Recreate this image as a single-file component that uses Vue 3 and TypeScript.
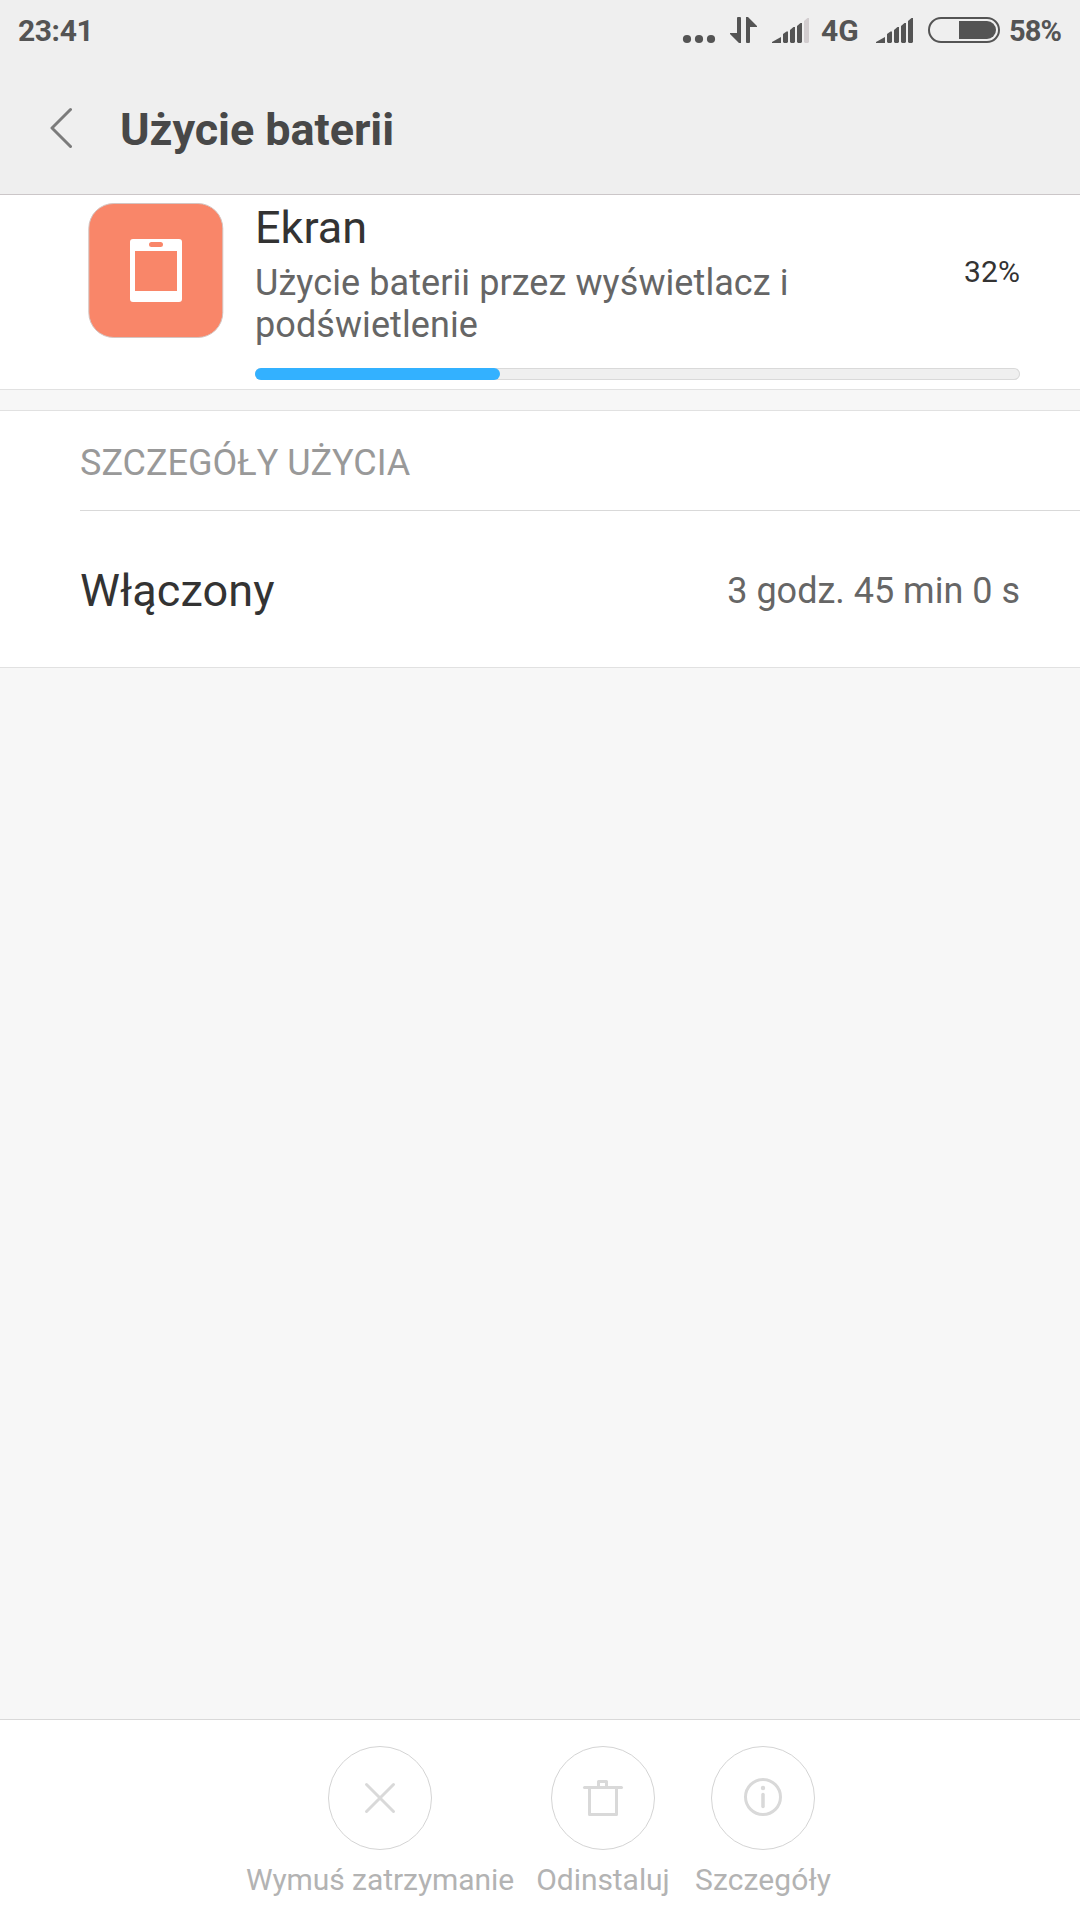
<script setup lang="ts">
interface Action {
  id: 'stop' | 'remove' | 'about'
  label: string
}

const usage = 32

const actions: Action[] = [
  { id: 'stop', label: 'Wymuś zatrzymanie' },
  { id: 'remove', label: 'Odinstaluj' },
  { id: 'about', label: 'Szczegóły' },
]
</script>

<template>
  <div class="screen">
    <div class="status">
      <span class="clock">23:41</span>
      <div class="indicators">
        <svg class="dots" width="34" height="62" viewBox="682 0 34 62" fill="#545454">
          <circle cx="687" cy="39" r="4.1" />
          <circle cx="699" cy="39" r="4.1" />
          <circle cx="711" cy="39" r="4.1" />
        </svg>
        <svg class="arrows" width="28" height="62" viewBox="730 0 28 62" fill="#545454">
          <path d="M737 18q0-1 1-1h2q1 0 1 1v25h-2l-9-9v-1h7z" />
          <path d="M746 17h2l9 9v1h-7v15q0 1-1 1h-2q-1 0-1-1z" />
        </svg>
        <svg class="signal" width="38" height="62" viewBox="772 0 38 62" fill="#545454">
          <path d="M772 42l9-5v6h-9z" />
          <path d="M783 34l3.500-2.500h1.500V42l-1 1h-3l-1-1z" />
          <path d="M790 30l3.500-3h1.500V42l-1 1h-3l-1-1z" />
          <path d="M797 26l3.500-3h1.500V42l-1 1h-3l-1-1z" />
          <path fill="#d2cdcf" d="M804 21l3.500-3h1.500V42l-1 1h-3l-1-1z" />
        </svg>
        <span class="network">4G</span>
        <svg class="signal-second" width="38" height="62" viewBox="772 0 38 62" fill="#545454">
          <path d="M772 42l9-5v6h-9z" />
          <path d="M783 34l3.500-2.500h1.500V42l-1 1h-3l-1-1z" />
          <path d="M790 30l3.500-3h1.500V42l-1 1h-3l-1-1z" />
          <path d="M797 26l3.500-3h1.500V42l-1 1h-3l-1-1z" />
          <path d="M804 21l3.500-3h1.500V42l-1 1h-3l-1-1z" />
        </svg>
        <svg class="battery" width="72" height="62" viewBox="928 0 72 62">
          <rect x="929" y="18" width="70" height="24" rx="12" fill="none" stroke="#545454" stroke-width="2" />
          <path fill="#545454" d="M959 21h28a9 9 0 0 1 0 18h-28z" />
        </svg>
        <span class="level">58%</span>
      </div>
    </div>

    <header class="header">
      <svg class="back" width="24" height="44" viewBox="0 0 24 44">
        <path d="M22.500 3.500L4 22l18.500 18.500" fill="none" stroke="#7b7b7b" stroke-width="3" stroke-linecap="round" stroke-linejoin="round" />
      </svg>
      <h1 class="title">Użycie baterii</h1>
    </header>

    <section class="summary">
      <svg class="app-icon" width="136" height="136" viewBox="0 0 136 136">
        <rect x=".8" y="1.500" width="134" height="134" rx="25" fill="#f98669" stroke="#d3c5c2" stroke-width="1" />
        <path fill="#fff" fill-rule="evenodd" d="M45 37h46q3 0 3 3v57q0 3-3 3H45q-3 0-3-3V40q0-3 3-3zM47 49v40h42V49zM63.500 40a2.500 2.500 0 0 0 0 5h9a2.500 2.500 0 0 0 0-5z" />
      </svg>
      <div class="info">
        <div class="row">
          <div class="texts">
            <div class="name">Ekran</div>
            <div class="description">Użycie baterii przez wyświetlacz i podświetlenie</div>
          </div>
          <span class="percent">{{ usage }}%</span>
        </div>
        <div class="track">
          <div class="fill" :style="{ width: usage + '%' }"></div>
        </div>
      </div>
    </section>

    <section class="details">
      <h2 class="caption">SZCZEGÓŁY UŻYCIA</h2>
      <div class="detail">
        <span class="key">Włączony</span>
        <span class="value">3 godz. 45 min 0 s</span>
      </div>
    </section>

    <footer class="actions">
      <div v-for="action in actions" :key="action.id" class="action" :class="action.id">
        <svg width="104" height="104" viewBox="0 0 104 104" fill="none" stroke="#d9d9d9" stroke-width="3">
          <circle cx="52" cy="52" r="51.500" stroke="#d4d4d4" stroke-width="1" />
          <path v-if="action.id === 'stop'" d="M38.500 38.500l27 27M65.500 38.500l-27 27" stroke-linecap="round" />
          <template v-else-if="action.id === 'remove'">
            <path d="M33.500 41.500h37" stroke-linecap="round" />
            <path d="M47.500 41v-5.500h8V41M38.500 42v26.500h27V42" stroke-linejoin="round" />
          </template>
          <template v-else>
            <circle cx="52" cy="51" r="17.500" />
            <circle cx="52" cy="42" r="2.200" fill="#d9d9d9" stroke="none" />
            <path d="M52 48.500v12" stroke-width="3.500" stroke-linecap="round" />
          </template>
        </svg>
        <span class="label">{{ action.label }}</span>
      </div>
    </footer>
  </div>
</template>

<style>
body {
  margin: 0;
  background: #f7f7f7;
}
</style>

<style scoped>
.screen {
  display: flex;
  flex-direction: column;
  box-sizing: border-box;
  width: 1080px;
  height: 1920px;
  overflow: hidden;
  background: #f7f7f7;
  color: #333;
  font-family: Roboto, "Noto Sans", sans-serif;
}

svg {
  display: block;
  flex: none;
}

.status {
  display: flex;
  justify-content: space-between;
  height: 62px;
  padding: 0 18px;
  background: #efefef;
  color: #545454;
  font-size: 30px;
  font-weight: 700;
  line-height: 62px;
}

.clock {
  letter-spacing: -0.4px;
}

.indicators {
  display: flex;
}

.arrows {
  margin-left: 14px;
}

.signal {
  margin-left: 14px;
}

.network {
  width: 38px;
  margin-left: 11px;
}

.signal-second {
  margin-left: 17px;
}

.battery {
  margin-left: 14px;
}

.level {
  width: 53px;
  margin-left: 9px;
  font-size: 29px;
  letter-spacing: -0.9px;
}

.header {
  display: flex;
  align-items: center;
  box-sizing: border-box;
  height: 133px;
  padding-left: 48px;
  border-bottom: 1px solid #cbc6c8;
  background: #efefef;
}

.title {
  margin: 3px 0 0 48px;
  color: #484848;
  font-size: 45px;
  font-weight: 700;
  letter-spacing: -0.07px;
  line-height: 54px;
}

.summary {
  display: flex;
  box-sizing: border-box;
  height: 195px;
  padding: 7px 60px 0 88px;
  border-bottom: 1px solid #e1e1e1;
  background: #fff;
}

.info {
  flex: 1;
  margin-left: 31px;
}

.row {
  display: flex;
  justify-content: space-between;
  height: 166px;
}

.texts {
  width: 600px;
}

.name {
  margin-top: -1px;
  font-size: 45px;
  line-height: 54px;
}

.description {
  margin-top: 7px;
  color: #666;
  font-size: 36px;
  letter-spacing: 0.08px;
  line-height: 42px;
}

.percent {
  margin-top: 52px;
  font-size: 30px;
  letter-spacing: 0.1px;
  line-height: 36px;
}

.track {
  box-sizing: border-box;
  height: 12px;
  border-radius: 6px;
  background: #efefef;
  box-shadow: inset 0 0 0 1px #d9d9d9;
}

.fill {
  height: 12px;
  border-radius: 6px;
  background: #33b1ff;
}

.details {
  margin-top: 20px;
  border-top: 1px solid #e1e1e1;
  border-bottom: 1px solid #e1e1e1;
  background: #fff;
}

.caption {
  box-sizing: border-box;
  height: 100px;
  margin: 0 0 0 80px;
  border-bottom: 1px solid #d9d9d9;
  color: #999;
  font-size: 36px;
  font-weight: 400;
  line-height: 105px;
}

.detail {
  display: flex;
  align-items: center;
  justify-content: space-between;
  height: 156px;
  padding: 0 60px 0 80px;
  line-height: 54px;
}

.key {
  margin-top: 4px;
  font-size: 45px;
  letter-spacing: 0.1px;
}

.value {
  margin-top: 4px;
  color: #666;
  font-size: 36px;
}

.actions {
  display: flex;
  justify-content: center;
  gap: 22px;
  box-sizing: border-box;
  height: 201px;
  margin-top: auto;
  padding-top: 26px;
  padding-right: 2px;
  border-top: 1px solid #d9d9d9;
  background: #fff;
}

.action {
  display: flex;
  flex-direction: column;
  align-items: center;
}

.stop {
  width: 268px;
}

.remove {
  width: 134px;
}

.about {
  width: 138px;
  margin-left: 2px;
}

.label {
  margin-top: 12px;
  color: #b3b3b3;
  font-size: 30px;
  letter-spacing: -0.06px;
  line-height: 36px;
  white-space: nowrap;
}

.about .label {
  letter-spacing: 0.1px;
}
</style>
